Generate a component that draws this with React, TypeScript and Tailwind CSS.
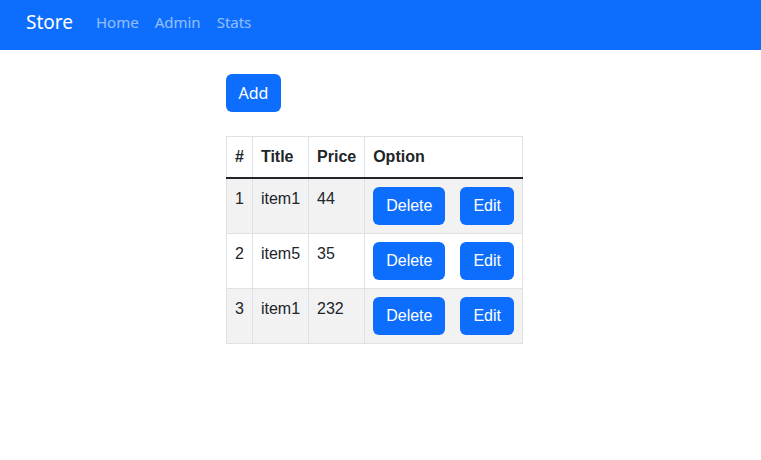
import React from 'react';

interface Item {
  id: number;
  title: string;
  price: number;
}

const items: Item[] = [
  { id: 1, title: 'item1', price: 44 },
  { id: 2, title: 'item5', price: 35 },
  { id: 3, title: 'item1', price: 232 },
];

const App = () => {
  return (
    <div className="min-h-screen bg-white text-[#212529]">
      {/* Navbar */}
      <nav className="h-[50px] bg-[#0d6efd] flex items-start pt-[9px] pl-[26px] font-['Noto_Sans',sans-serif]">
        <span className="text-[19px] leading-[26px] text-white mr-[19px]">Store</span>
        <div className="flex gap-[8px] text-[15px] leading-[26px] text-white/55">
          <a className="px-[4px]">Home</a>
          <a className="px-[4px]">Admin</a>
          <a className="px-[4px]">Stats</a>
        </div>
      </nav>

      {/* Content */}
      <div className="pl-[226px] pt-[24px]">
        <button className="h-[38px] w-[55px] rounded-[6px] bg-[#0d6efd] text-white text-[16px] font-['Noto_Sans',sans-serif] mb-[24px]">
          Add
        </button>

        <table className="border-collapse font-['Liberation_Sans',Arial,sans-serif] text-[16px] leading-[24px]">
          <thead>
            <tr>
              <th className="border border-[#dee2e6] border-b-2 border-b-[#212529] p-[8px] text-left font-bold">#</th>
              <th className="border border-[#dee2e6] border-b-2 border-b-[#212529] p-[8px] text-left font-bold">Title</th>
              <th className="border border-[#dee2e6] border-b-2 border-b-[#212529] p-[8px] text-left font-bold">Price</th>
              <th className="border border-[#dee2e6] border-b-2 border-b-[#212529] p-[8px] text-left font-bold">Option</th>
            </tr>
          </thead>
          <tbody>
            {items.map((item, i) => (
              <tr key={item.id} className={i % 2 === 0 ? 'bg-[#f2f2f2]' : 'bg-white'}>
                <td className="border border-[#dee2e6] p-[8px] align-top">{item.id}</td>
                <td className="border border-[#dee2e6] p-[8px] align-top">{item.title}</td>
                <td className="border border-[#dee2e6] p-[8px] align-top">{item.price}</td>
                <td className="border border-[#dee2e6] p-[8px] align-top">
                  <div className="flex gap-[15px]">
                    <button className="h-[38px] px-[13px] rounded-[6px] bg-[#0d6efd] text-white">Delete</button>
                    <button className="h-[38px] px-[13px] rounded-[6px] bg-[#0d6efd] text-white">Edit</button>
                  </div>
                </td>
              </tr>
            ))}
          </tbody>
        </table>
      </div>
    </div>
  );
};

export default App;
